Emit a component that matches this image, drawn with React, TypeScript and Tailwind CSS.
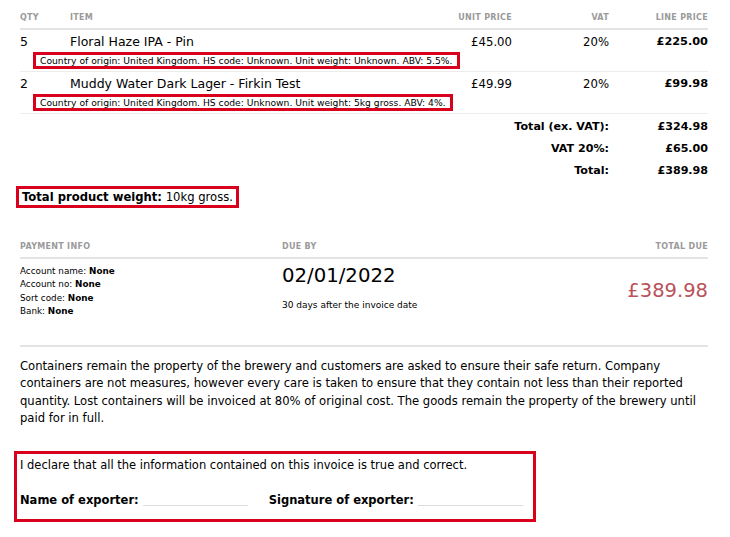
const items = [
  {
    qty: 5,
    name: "Floral Haze IPA - Pin",
    details:
      "Country of origin: United Kingdom. HS code: Unknown. Unit weight: Unknown. ABV: 5.5%.",
    unit: "£45.00",
    vat: "20%",
    line: "£225.00",
  },
  {
    qty: 2,
    name: "Muddy Water Dark Lager - Firkin Test",
    details:
      "Country of origin: United Kingdom. HS code: Unknown. Unit weight: 5kg gross. ABV: 4%.",
    unit: "£49.99",
    vat: "20%",
    line: "£99.98",
  },
];

const totals = [
  { label: "Total (ex. VAT):", value: "£324.98" },
  { label: "VAT 20%:", value: "£65.00" },
  { label: "Total:", value: "£389.98" },
];

const font = { fontFamily: '"DejaVu Sans", Verdana, sans-serif' };

export default function App() {
  return (
    <div
      className="w-[730px] min-h-[537px] bg-white text-black pl-[20px] pr-[22px] pt-[12px]"
      style={font}
    >
      {/* Items table */}
      <div className="grid grid-cols-[50px_1fr_100px_97px_99px] text-[8px] font-bold uppercase text-[#9a9a9a] tracking-[0.3px] pb-[4px] border-b-2 border-[#e4e4e4]">
        <div>Qty</div>
        <div>Item</div>
        <div className="text-right">Unit price</div>
        <div className="text-right">Vat</div>
        <div className="text-right">Line price</div>
      </div>

      {items.map((it) => (
        <div key={it.name} className="border-b border-[#ececec] pt-[4px] pb-[2px]">
          <div className="grid grid-cols-[50px_1fr_100px_97px_99px] items-center text-[11.7px] leading-[16px]">
            <div className="text-[12.5px]">{it.qty}</div>
            <div className="text-[12.5px]">{it.name}</div>
            <div className="text-right">{it.unit}</div>
            <div className="text-right">{it.vat}</div>
            <div className="text-right font-bold text-[11.3px]">{it.line}</div>
          </div>
          <div className="flex pl-[13px] mt-[2px]">
            <span className="border-[3px] border-[#d8001c] px-[4px] text-[9.2px] leading-[11px]">
              {it.details}
            </span>
          </div>
        </div>
      ))}

      {/* Totals */}
      <div className="flex flex-col items-end pt-[4px] gap-[4px]">
        {totals.map((t) => (
          <div key={t.label} className="flex text-[11.1px] font-bold leading-[18px]">
            <div className="text-right">{t.label}</div>
            <div className="w-[99px] text-right">{t.value}</div>
          </div>
        ))}
      </div>

      <div className="flex mt-[6px] -ml-[4px]">
        <span className="border-[3px] border-[#d8001c] px-[3px] text-[11.6px] leading-[16px]">
          <b>Total product weight:</b> 10kg gross.
        </span>
      </div>

      {/* Payment info */}
      <div className="mt-[33px] grid grid-cols-[262px_1fr_auto] text-[8px] font-bold uppercase text-[#9a9a9a] tracking-[0.3px] pb-[4px] border-b-2 border-[#e4e4e4]">
        <div>Payment info</div>
        <div>Due by</div>
        <div className="text-right">Total due</div>
      </div>
      <div className="grid grid-cols-[262px_1fr_auto] pt-[6px] pb-[26px] border-b-2 border-[#e4e4e4]">
        <div className="text-[8.8px] leading-[13.4px]">
          <div>
            Account name: <b>None</b>
          </div>
          <div>
            Account no: <b>None</b>
          </div>
          <div>
            Sort code: <b>None</b>
          </div>
          <div>
            Bank: <b>None</b>
          </div>
        </div>
        <div className="-mt-[1px]">
          <div className="text-[19.7px] leading-[24px]">02/01/2022</div>
          <div className="text-[9px] mt-[11px]">30 days after the invoice date</div>
        </div>
        <div className="text-right text-[19.5px] text-[#b9525a] pt-[11px]">£389.98</div>
      </div>

      {/* Terms */}
      <p
        className="mt-[10px] text-[12.9px] leading-[17.5px]"
        style={{ fontStretch: "condensed" }}
      >
        Containers remain the property of the brewery and customers are asked to
        ensure their safe return. Company containers are not measures, however
        every care is taken to ensure that they contain not less than their
        reported quantity. Lost containers will be invoiced at 80% of original
        cost. The goods remain the property of the brewery until paid for in full.
      </p>

      {/* Declaration */}
      <div className="mt-[24px] -ml-[6px] w-[522px] border-[3px] border-[#d8001c] pl-[3px] pt-[3px] pb-[11px]">
        <div className="text-[11.5px] leading-[16px]">
          I declare that all the information contained on this invoice is true and correct.
        </div>
        <div className="flex items-end mt-[19px] text-[11.5px] leading-[16px] font-bold">
          <span>Name of exporter:</span>
          <span className="ml-[4px] w-[105px] border-b border-[#dcdcdc] mb-[2px]"></span>
          <span className="ml-[21px]">Signature of exporter:</span>
          <span className="ml-[4px] w-[105px] border-b border-[#dcdcdc] mb-[2px]"></span>
        </div>
      </div>
    </div>
  );
}
